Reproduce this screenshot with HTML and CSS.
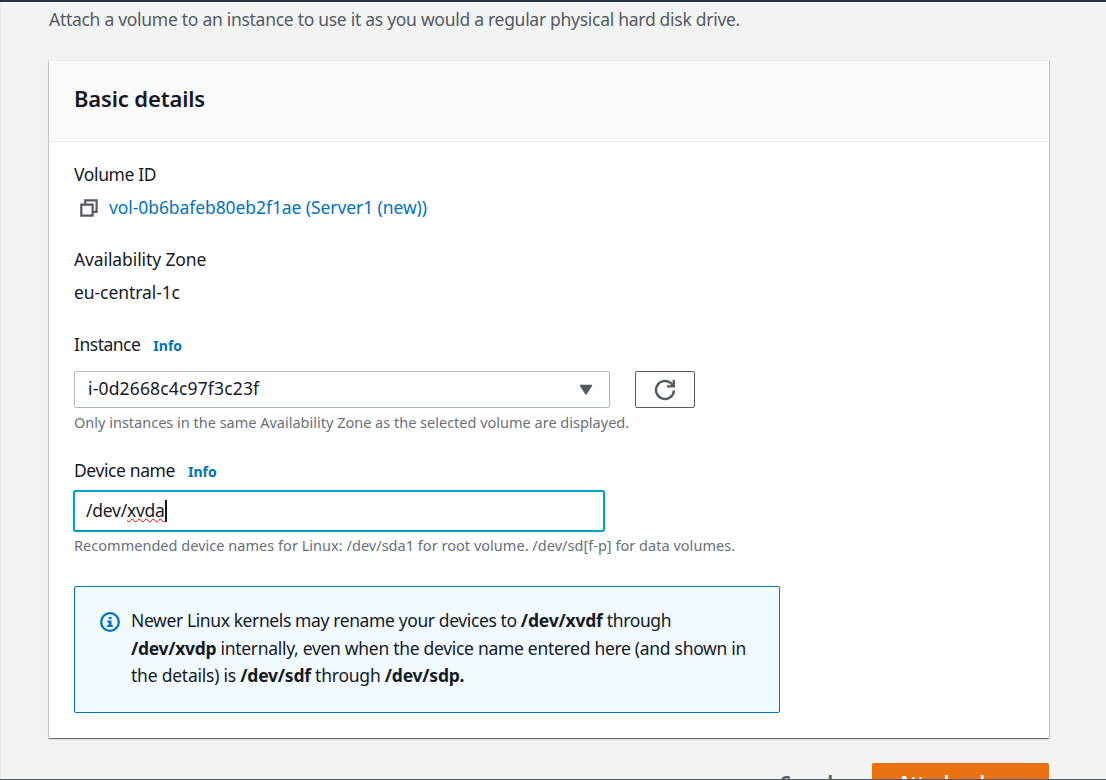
FILE: index.html
```html
<!DOCTYPE html>
<html lang="en">
<head>
<meta charset="utf-8">
<title>Attach volume</title>
<link rel="stylesheet" href="styles.css">
</head>
<body>
<div class="page">
  <main class="content">
    <p class="intro">Attach a volume to an instance to use it as you would a regular physical hard disk drive.</p>
    <section class="panel">
      <header class="panel-header"><h2>Basic details</h2></header>
      <div class="panel-body">
        <div class="field">
          <div class="label volume-label">Volume ID</div>
          <div class="value volume">
            <svg class="copy-icon" width="20" height="20" viewBox="0 0 20 20" fill="none" stroke="#545b64" stroke-width="2.2"><path d="M2.3 6.6h11.3v11H2.3zM6.2 6.6V2.3h11.4v11.5h-4"/></svg>
            <a class="volume-link">vol-0b6bafeb80eb2f1ae (Server1 (new))</a>
          </div>
        </div>
        <div class="field">
          <div class="label zone">Availability Zone</div>
          <div class="value region">eu-central-1c</div>
        </div>
        <div class="field instance-field">
          <div class="label"><span class="instance-label">Instance</span><a class="info">Info</a></div>
          <div class="select-row">
            <div class="select"><span>i-0d2668c4c97f3c23f</span>
              <svg width="14" height="12" viewBox="0 0 14 12"><path d="M1.6 1.5h10.8L7 9.8z" fill="#545b64" stroke="#545b64" stroke-width="1.6" stroke-linejoin="round"/></svg>
            </div>
            <button class="refresh" aria-label="Refresh"><svg width="22" height="22" viewBox="0 0 22 22" fill="none" stroke="#545b64" stroke-width="2.4"><path d="M20 11.4a9 9 0 1 1-3.2-7.3L19 6.4M19.8 1v6.4H13"/></svg></button>
          </div>
          <div class="hint instance-hint">Only instances in the same Availability Zone as the selected volume are displayed.</div>
        </div>
        <div class="field device-field">
          <div class="label"><span class="device-label">Device name</span><a class="info">Info</a></div>
          <div class="input"><span>/dev/<span class="misspelled">xvda</span></span><i class="caret"></i></div>
          <div class="hint device-hint">Recommended device names for Linux: /dev/sda1 for root volume. /dev/sd[f-p] for data volumes.</div>
        </div>
        <div class="alert">
          <svg class="info-icon" width="20" height="20" viewBox="0 0 20 20"><circle cx="10" cy="10" r="8.8" fill="none" stroke="#0073bb" stroke-width="2.3"/><path d="M8.7 5h2.8v2.3H8.7zM7.4 8.5h4.1v4.4h1.3V15H7.2v-2.1h1.5v-2.3H7.4z" fill="#0073bb"/></svg>
          <p><span class="line-first">Newer Linux kernels may rename your devices to <b>/dev/xvdf</b> through</span><br><span class="line-middle"><b>/dev/xvdp</b> internally, even when the device name entered here (and shown in</span><br><span class="line-last">the details) is <b>/dev/sdf</b> through <b>/dev/sdp.</b></span></p>
        </div>
      </div>
    </section>
    <div class="actions"><button class="cancel">Cancel</button><button class="primary">Attach volume</button></div>
  </main>
</div>
</body>
</html>
```
FILE: styles.css
```css
* { box-sizing: border-box; }
body { margin: 0; background: #f2f3f3; color: #16191f; font: 17.5px/28px "Noto Sans", "Open Sans", sans-serif; }
.page { height: 780px; overflow: hidden; border-top: 2px solid #2b3443; border-bottom: 1px solid #545b64; }
.content { height: 777px; border-left: 1px solid #e6e8e8; padding: 3px 57px 0 48px; }
.intro { margin: 0 0 27px; color: #545b64; letter-spacing: -.285px; }
.panel { height: 678px; background: #fff; box-shadow: 0 1px 1px rgba(0,28,36,.4), 1px 1px 1px rgba(0,28,36,.15), -1px 1px 1px rgba(0,28,36,.15); border-top: 1px solid #eaeded; }
.panel-header { height: 81px; padding: 23px 25px; background: #fafafa; border-bottom: 1px solid #eaeded; }
h2 { margin: 0; font-size: 22px; line-height: 28px; font-weight: 600; letter-spacing: -.15px; }
.panel-body { padding: 19px 25px 0; }
.field { margin-bottom: 24px; }
.label { height: 28px; padding-bottom: 2px; display: flex; align-items: center; white-space: nowrap; }
.volume-label { letter-spacing: -.37px; }
.zone { letter-spacing: -.11px; }
.region, .volume-link { letter-spacing: -.08px; line-height: 26px; }
.volume-link { padding-bottom: 2px; }
.instance-label { letter-spacing: -.5px; }
.device-label { letter-spacing: -.4px; }
.value { margin-top: 5px; height: 28px; white-space: nowrap; }
.volume { display: flex; align-items: center; gap: 10px; padding-left: 5px; }
a { color: #0073bb; }
.info { font-size: 14px; font-weight: 700; margin-left: 13px; padding-top: 3px; }
.select-row { display: flex; gap: 25px; margin-top: 12px; }
.select { width: 536px; height: 37px; border: 1px solid #aab7b8; border-radius: 2px; padding: 0 16px 0 13px; display: flex; align-items: center; justify-content: space-between; letter-spacing: .16px; }
.select span { padding-bottom: 3px; }
.refresh { width: 60px; height: 37px; border: 1px solid #545b64; border-radius: 2px; background: #fff; padding: 0; display: flex; align-items: center; justify-content: center; }
.hint { font-size: 14.5px; line-height: 22px; color: #687078; margin-top: 3px; white-space: nowrap; }
.device-hint { margin-top: 2px; letter-spacing: .03px; }
.device-field { margin-bottom: 30px; }
.input { width: 532px; height: 42px; margin: 5px 0 0 -1px; padding: 0 11px; border: 2px solid #00a1c9; border-radius: 3px; box-shadow: 0 0 1px #00a1c9; display: flex; align-items: center; letter-spacing: -.25px; }
.input > span { padding-bottom: 2px; }
.misspelled { text-decoration: underline wavy #e00 1px; text-underline-offset: 1px; text-decoration-skip-ink: none; }
.caret { width: 2px; height: 22px; background: #16191f; }
.alert { width: 706px; height: 127px; background: #f1faff; border: 1px solid #0073bb; border-radius: 2px; padding: 20px 25px; display: flex; gap: 11px; }
.info-icon { margin-top: 5px; flex: none; }
.alert p { margin: 0; line-height: 27.5px; white-space: nowrap; }
.line-first { letter-spacing: -.39px; }
.line-first b { letter-spacing: -.2px; }
.line-middle { letter-spacing: -.3px; }
.line-last { letter-spacing: -.23px; }
.actions { display: flex; justify-content: flex-end; margin-top: 25px; }
.actions button { height: 38px; border: 0; border-radius: 2px; font: 700 17px/36px "Noto Sans", sans-serif; padding: 2px 0 0; }
.actions .cancel { background: transparent; color: #545b64; width: 90px; margin-right: 21px; letter-spacing: -.6px; }
.primary { width: 177px; background: #ec7211; color: #fff; }
```
